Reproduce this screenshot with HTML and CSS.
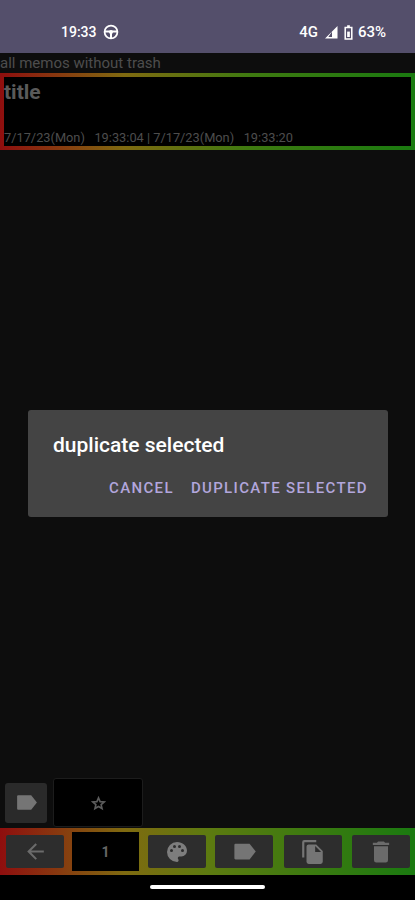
FILE: index.html
```html
<!DOCTYPE html>
<html lang="en">
<head>
  <meta charset="UTF-8" />
  <meta name="viewport" content="width=device-width, initial-scale=1.0"/>
  <title>Memos</title>
  <link rel="stylesheet" href="styles.css">
</head>
<body>
  <div class="screen">

    <!-- Status bar -->
    <div class="status">
      <div class="status-left">
        <span>19:33</span>
        <svg viewBox="0 0 16 16" width="16" height="16">
          <circle cx="8" cy="8" r="6.4" fill="none" stroke="#fff" stroke-width="1.8"/>
          <path d="M2 6.600h12v2H2zM7 8h2v6H7z" fill="#fff"/>
          <circle cx="8" cy="8" r="2" fill="#fff"/>
        </svg>
      </div>
      <div class="status-right">
        <span>4G</span>
        <svg viewBox="0 0 14 14" width="14" height="14">
          <path d="M13.500 1v12.500H1zM8 6.700L4.300 12H8z" fill="#fff" fill-rule="evenodd"/>
        </svg>
        <svg viewBox="0 0 10 16" width="9" height="15">
          <path d="M3.500 0h3v1.500H9.500V16H.5V1.500h3zM2.200 3.200v11.100h5.600V3.200z" fill="#fff" fill-rule="evenodd"/>
          <path d="M3.500 7h3v6h-3z" fill="#fff"/>
        </svg>
        <span class="battery-level">63%</span>
      </div>
    </div>

    <div class="heading">all memos without trash</div>

    <!-- Memo card -->
    <div class="memo">
      <div class="memo-inner">
        <div class="memo-title">title</div>
        <div class="memo-date">7/17/23(Mon)&nbsp;&nbsp;&nbsp;19:33:04 | 7/17/23(Mon)&nbsp;&nbsp;&nbsp;19:33:20</div>
      </div>
    </div>

    <div class="spacer"></div>

    <!-- Filter row -->
    <div class="filters">
      <div class="btn-tag">
        <svg viewBox="0 0 24 24" width="25" height="25"><path d="M4 5h12.500l5.500 7-5.500 7H4a1 1 0 0 1-1-1V6a1 1 0 0 1 1-1z" fill="#757575"/></svg>
      </div>
      <div class="btn-star">
        <svg viewBox="0 0 24 24" width="15" height="15"><path d="M12 3l2.600 6 6.400.6-4.800 4.200 1.500 6.300-5.700-3.400-5.700 3.400 1.500-6.300L3 9.600 9.400 9z" fill="none" stroke="#5c5c5c" stroke-width="2.600"/></svg>
      </div>
    </div>

    <!-- Toolbar -->
    <div class="toolbar">
      <div class="tool">
        <svg viewBox="0 0 24 24" width="25" height="25"><path d="M20 11H7.800l5.600-5.600L12 4l-8 8 8 8 1.400-1.400L7.800 13H20z" fill="#6b6b6b"/></svg>
      </div>
      <div class="count">1</div>
      <div class="tool">
        <svg viewBox="0 0 24 24" width="24" height="24"><path d="M12 2a10 10 0 0 0 0 20 1.700 1.700 0 0 0 1.200-2.800 1.700 1.700 0 0 1 1.200-2.800h2A5.600 5.600 0 0 0 22 10.800C22 5.900 17.500 2 12 2zM6.500 12a1.500 1.500 0 1 1 0-3 1.500 1.500 0 0 1 0 3zm3-4a1.500 1.500 0 1 1 0-3 1.500 1.500 0 0 1 0 3zm5 0a1.500 1.500 0 1 1 0-3 1.500 1.500 0 0 1 0 3zm3 4a1.500 1.500 0 1 1 0-3 1.500 1.500 0 0 1 0 3z" fill="#7d7d7d"/></svg>
      </div>
      <div class="tool">
        <svg viewBox="0 0 24 24" width="27" height="27"><path d="M4 5h12.500l5.500 7-5.500 7H4a1 1 0 0 1-1-1V6a1 1 0 0 1 1-1z" fill="#757575"/></svg>
      </div>
      <div class="tool tool-copy">
        <svg viewBox="0 0 24 24" width="26" height="26"><path d="M15 1H4a2 2 0 0 0-2 2v14h2V3h11zM8 5a2 2 0 0 0-2 2v14a2 2 0 0 0 2 2h11a2 2 0 0 0 2-2V11l-6-6zm6 1.500l5.500 5.500H14z" fill="#757575" fill-rule="evenodd"/></svg>
      </div>
      <div class="tool tool-trash">
        <svg viewBox="0 0 24 24" width="28" height="28"><path d="M6 19a2 2 0 0 0 2 2h8a2 2 0 0 0 2-2V7H6zM19 4h-3.500l-1-1h-5l-1 1H5v2h14z" fill="#6b6b6b"/></svg>
      </div>
    </div>

    <!-- Nav bar -->
    <div class="navbar"><div class="pill"></div></div>

    <!-- Dialog -->
    <div class="dialog">
      <div class="dialog-title">duplicate selected</div>
      <div class="dialog-actions">
        <span class="action">CANCEL</span>
        <span class="action">DUPLICATE SELECTED</span>
      </div>
    </div>

  </div>
</body>
</html>
```

FILE: styles.css
```css
html, body {
  margin: 0;
  padding: 0;
  background: #0d0d0d;
}
.screen {
  position: relative;
  display: flex;
  flex-direction: column;
  width: 415px;
  height: 900px;
  overflow: hidden;
  font-family: Roboto, "Liberation Sans", sans-serif;
}
.status {
  flex: none;
  height: 53px;
  box-sizing: border-box;
  padding: 21px 29px 0 61px;
  display: flex;
  justify-content: space-between;
  align-items: flex-start;
  background: #544f6b;
  color: #fff;
  font-size: 14px;
  font-weight: 500;
  line-height: 22px;
}
.status-left, .status-right {
  display: flex;
  align-items: center;
}
.status-left {
  gap: 6px;
}
.status-right {
  gap: 6px;
  font-size: 15px;
}
.battery-level {
  margin-left: -1px;
}
.heading {
  flex: none;
  height: 20px;
  font-size: 15px;
  line-height: 21px;
  color: #4d4d4d;
  white-space: nowrap;
}
.memo {
  flex: none;
  height: 77px;
  box-sizing: border-box;
  padding: 4px;
  background: linear-gradient(to right, #8f0e0e 0%, #7f6a10 30%, #3f7a10 60%, #1a7a10 100%);
}
.memo-inner {
  display: flex;
  flex-direction: column;
  justify-content: space-between;
  height: 100%;
  background: #000;
}
.memo-title {
  font-size: 21px;
  font-weight: 700;
  line-height: 30px;
  color: #5a5a5a;
}
.memo-date {
  font-size: 12.8px;
  line-height: 16px;
  color: #4d4d4d;
  white-space: nowrap;
}
.spacer {
  flex: 1;
}
.filters {
  flex: none;
  display: flex;
  align-items: center;
  gap: 6px;
  height: 49px;
  padding-left: 5px;
  margin-bottom: 1px;
}
.btn-tag {
  width: 42px;
  height: 40px;
  display: flex;
  align-items: center;
  justify-content: center;
  background: #2a2a2a;
  border-radius: 3px;
}
.btn-star {
  width: 90px;
  height: 49px;
  padding-top: 2px;
  display: flex;
  align-items: center;
  justify-content: center;
  box-sizing: border-box;
  background: #000;
  border: 1px solid #1c1c1c;
  border-radius: 3px;
}
.toolbar {
  flex: none;
  height: 47px;
  box-sizing: border-box;
  padding: 4px 5px 4px 6px;
  display: flex;
  align-items: center;
  gap: 9px;
  background: linear-gradient(to right, #8f0e0e 0%, #7f6a10 30%, #5d7a10 50%, #1a7a10 100%);
}
.tool {
  flex: none;
  width: 58px;
  height: 33px;
  display: flex;
  align-items: center;
  justify-content: center;
  background: #2d2d2d;
  border-radius: 2px;
}
.tool-copy {
  margin-left: 2px;
}
.tool-trash {
  margin-left: 1px;
}
.count {
  flex: none;
  width: 67px;
  height: 39px;
  margin-left: -1px;
  display: flex;
  align-items: center;
  justify-content: center;
  background: #000;
  color: #666;
  font-size: 14px;
  font-weight: 700;
}
.navbar {
  flex: none;
  height: 25px;
  display: flex;
  justify-content: center;
  background: #000;
}
.pill {
  width: 115px;
  height: 4px;
  margin-top: 10px;
  background: #fff;
  border-radius: 2px;
}
.dialog {
  position: absolute;
  left: 28px;
  top: 410px;
  width: 360px;
  height: 107px;
  box-sizing: border-box;
  padding: 22px 20px 0 25px;
  background: #444;
  border-radius: 3px;
}
.dialog-title {
  font-size: 21px;
  font-weight: 500;
  line-height: 26px;
  color: #fff;
}
.dialog-actions {
  display: flex;
  justify-content: flex-end;
  gap: 17px;
  margin-top: 20px;
}
.action {
  font-size: 15px;
  font-weight: 500;
  line-height: 20px;
  letter-spacing: 1.35px;
  color: #b2a6dc;
}
```
